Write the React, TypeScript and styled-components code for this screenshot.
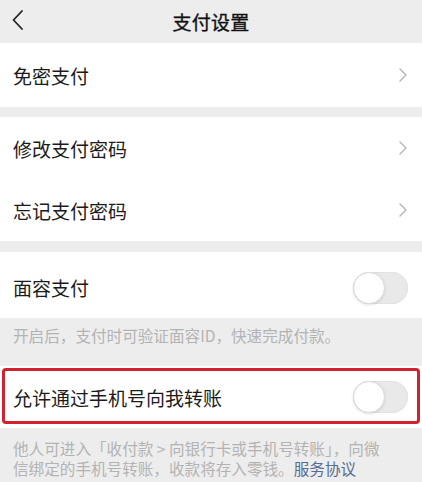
import styled, { createGlobalStyle } from "styled-components";

const GlobalStyle = createGlobalStyle`
  html, body {
    margin: 0;
    padding: 0;
    background: #ededed;
  }
  body {
    font-family: "Noto Sans CJK SC", "Noto Sans", sans-serif;
    color: #1b1b1b;
    overflow: hidden;
  }
`;

const Page = styled.div`
  width: 422px;
  height: 482px;
  display: flex;
  flex-direction: column;
  background: #ededed;
`;

const Header = styled.div`
  height: 43px;
  display: flex;
  align-items: center;
  justify-content: center;
  position: relative;
`;

const BackButton = styled.div`
  position: absolute;
  left: 10px;
  top: 8px;
  width: 16px;
  height: 24px;
  display: flex;
`;

const Title = styled.div`
  font-size: 19px;
  font-weight: 400;
  color: #111;
  letter-spacing: 0.2px;
  -webkit-text-stroke: 0.35px #111;
`;

const Group = styled.div<{ $top?: number }>`
  margin-top: ${(p) => p.$top ?? 0}px;
  background: #fff;
  display: flex;
  flex-direction: column;
`;

const Row = styled.div<{ $height: number; $shift?: number; $highlight?: boolean }>`
  height: ${(p) => p.$height}px;
  padding: ${(p) => p.$shift ?? 0}px 13px 0 13px;
  box-sizing: border-box;
  display: flex;
  align-items: center;
  justify-content: space-between;
  position: relative;
  background: #fff;

  ${(p) =>
    p.$highlight &&
    `
    &::after {
      content: "";
      position: absolute;
      left: 2px;
      right: 2px;
      top: 2px;
      bottom: 4px;
      border: 3px solid #d3222f;
      border-radius: 4px;
      pointer-events: none;
    }
  `}
`;

const Label = styled.span`
  font-size: 19px;
  color: #1b1b1b;
`;

const Note = styled.div<{ $top: number; $height: number }>`
  height: ${(p) => p.$height}px;
  box-sizing: border-box;
  padding: ${(p) => p.$top}px 13px 0 13px;
  font-size: 15.6px;
  line-height: 20px;
  color: #b3b3b3;
  white-space: nowrap;
`;

const Link = styled.span`
  color: #576b95;
`;

const Track = styled.div<{ $on?: boolean }>`
  width: 55px;
  height: 32px;
  border-radius: 16px;
  background: ${(p) => (p.$on ? "#07c160" : "#e9e9e9")};
  position: relative;
  margin-right: 1px;
  box-shadow: inset 0 0 0 1px #e2e2e2;
`;

const Knob = styled.div`
  position: absolute;
  left: 0;
  top: 0;
  width: 32px;
  height: 32px;
  box-sizing: border-box;
  border-radius: 50%;
  background: #fff;
  border: 1.5px solid #dcdcdc;
  box-shadow: 0 1px 3px rgba(0, 0, 0, 0.12);
`;

const Chevron = () => (
  <svg width="12" height="16" viewBox="0 0 12 16">
    <path
      d="M3 2 L9 8 L3 14"
      fill="none"
      stroke="#b9b9b9"
      strokeWidth="1.5"
      strokeLinecap="round"
      strokeLinejoin="round"
    />
  </svg>
);

const Switch = ({ on }: { on?: boolean }) => (
  <Track $on={on}>
    <Knob />
  </Track>
);

export default function App() {
  return (
    <Page>
      <GlobalStyle />
      <Header>
        <BackButton>
          <svg width="16" height="24" viewBox="0 0 16 24">
            <path
              d="M12 3 L3.5 12 L12 21"
              fill="none"
              stroke="#222"
              strokeWidth="1.8"
              strokeLinecap="round"
              strokeLinejoin="round"
            />
          </svg>
        </BackButton>
        <Title>支付设置</Title>
      </Header>

      <Group>
        <Row $height={64}>
          <Label>免密支付</Label>
          <Chevron />
        </Row>
      </Group>

      <Group $top={10}>
        <Row $height={62}>
          <Label>修改支付密码</Label>
          <Chevron />
        </Row>
        <Row $height={62}>
          <Label>忘记支付密码</Label>
          <Chevron />
        </Row>
      </Group>

      <Group $top={11}>
        <Row $height={66} $shift={5}>
          <Label>面容支付</Label>
          <Switch />
        </Row>
      </Group>
      <Note $top={7} $height={48}>
        开启后，支付时可验证面容ID，快速完成付款。
      </Note>

      <Group>
        <Row $height={62} $highlight>
          <Label>允许通过手机号向我转账</Label>
          <Switch />
        </Row>
      </Group>
      <Note $top={10} $height={54}>
        他人可进入「收付款 &gt; 向银行卡或手机号转账」，向微
        <br />
        信绑定的手机号转账，收款将存入零钱。<Link>服务协议</Link>
      </Note>
    </Page>
  );
}
